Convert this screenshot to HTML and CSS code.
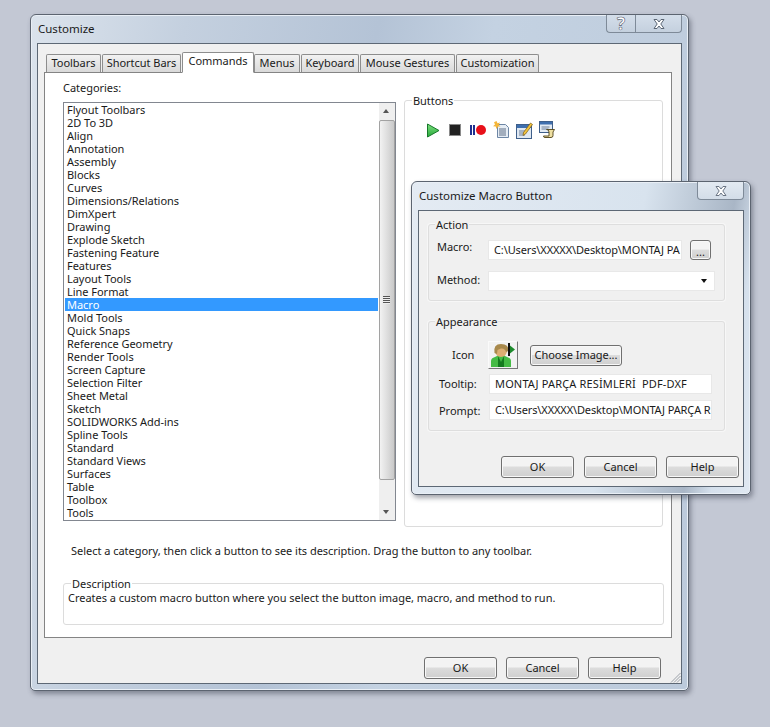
FILE: index.html
```html
<!DOCTYPE html>
<html lang="en">
<head>
<meta charset="utf-8">
<title>Customize</title>
<link rel="stylesheet" href="styles.css">
</head>
<body>
<section class="window main-window">
  <header class="titlebar">
    <span class="title">Customize</span>
    <div class="caption-buttons">
      <span class="caption-btn help-btn">?</span>
      <span class="caption-btn close-btn">
        <svg width="16" height="12" viewBox="0 0 16 12"><path d="M3 1.500h3l2 2.500 2-2.500h3L9.800 6 13 10.500h-3L8 8l-2 2.500H3L6.200 6z" fill="#fff" stroke="#5b6675"/></svg>
      </span>
    </div>
  </header>
  <div class="client main-client">
    <nav class="tabs">
      <span class="tab">Toolbars</span>
      <span class="tab">Shortcut Bars</span>
      <span class="tab tab-active">Commands</span>
      <span class="tab">Menus</span>
      <span class="tab">Keyboard</span>
      <span class="tab">Mouse Gestures</span>
      <span class="tab">Customization</span>
    </nav>
    <div class="page">
      <div class="page-top">
        <div class="categories">
          <div class="cat-label">Categories:</div>
          <div class="listbox">
            <ul class="list">
              <li>Flyout Toolbars</li><li>2D To 3D</li><li>Align</li><li>Annotation</li><li>Assembly</li><li>Blocks</li><li>Curves</li><li>Dimensions/Relations</li><li>DimXpert</li><li>Drawing</li><li>Explode Sketch</li><li>Fastening Feature</li><li>Features</li><li>Layout Tools</li><li>Line Format</li><li class="selected">Macro</li><li>Mold Tools</li><li>Quick Snaps</li><li>Reference Geometry</li><li>Render Tools</li><li>Screen Capture</li><li>Selection Filter</li><li>Sheet Metal</li><li>Sketch</li><li>SOLIDWORKS Add-ins</li><li>Spline Tools</li><li>Standard</li><li>Standard Views</li><li>Surfaces</li><li>Table</li><li>Toolbox</li><li>Tools</li>
            </ul>
            <div class="scrollbar">
              <span class="arrow arrow-up"></span>
              <div class="thumb"><span class="grip"></span></div>
              <span class="arrow arrow-down"></span>
            </div>
          </div>
        </div>
        <div class="group buttons-group">
          <span class="legend">Buttons</span>
          <div class="toolbar">
            <svg width="14" height="15" viewBox="0 0 14 15"><defs><linearGradient id="playFill" x1="0" y1="0" x2="0" y2="1"><stop offset="0" stop-color="#7fe07f"/><stop offset="1" stop-color="#25a83a"/></linearGradient></defs><path d="M1.500 1 13 7.500 1.500 14z" fill="url(#playFill)" stroke="#17782a"/></svg>
            <svg width="13" height="14" viewBox="0 0 13 14"><rect x=".5" y="1.500" width="11" height="11" fill="#222" stroke="#8a8a8a"/></svg>
            <svg width="17" height="14" viewBox="0 0 17 14"><rect x="0" y="2" width="2" height="10" fill="#1f2f8f"/><rect x="3" y="2" width="2" height="10" fill="#1f2f8f"/><circle cx="11" cy="7" r="5" fill="#e8101a"/></svg>
            <svg width="17" height="18" viewBox="0 0 17 18"><path d="M4.500 3.500h8l3 3v10h-11z" fill="#e6edf5" stroke="#6d86a5"/><path d="M6 8h7M6 10h7M6 12h7M6 14h7" stroke="#5f6f85"/><path d="M3.500 0 4.500 2.300 7 1.500 5.700 3.700 7.500 5.500 5 5.500 3.500 8 2.700 5.500 0 5.200 2 3.500 1 1.200z" fill="#f4b63a"/></svg>
            <svg width="17" height="17" viewBox="0 0 17 17"><rect x=".5" y="2.500" width="15" height="14" fill="#dfe8f2" stroke="#3f5f8a"/><rect x="1" y="3" width="14" height="3" fill="#3f6fae"/><path d="M3 9h6M3 11h5M3 13h6" stroke="#6c7f99"/><path d="M14.500 1 16.500 2.500 9.500 12 7 13.500 7.500 10.500z" fill="#f2c33c" stroke="#7a5a12" stroke-width=".7"/></svg>
            <svg width="17" height="18" viewBox="0 0 17 18"><rect x=".5" y=".5" width="13" height="11" fill="#e3ebf4" stroke="#3f5f8a"/><rect x="1" y="1" width="12" height="2.500" fill="#3f6fae"/><path d="M2.500 6h8M2.500 8h7" stroke="#6c7f99"/><path d="M7.500 8.500h8l-1.500 2.500v3.500q0 2-2 2h-6q-1.500 0-1.500-1.500h5.500V11q0-2.500-2.500-2.500z" fill="#efe0a2" stroke="#4f4216" stroke-width=".9"/></svg>
          </div>
        </div>
      </div>
      <p class="hint">Select a category, then click a button to see its description. Drag the button to any toolbar.</p>
      <div class="group desc-group">
        <span class="legend">Description</span>
        <p class="desc-text">Creates a custom macro button where you select the button image, macro, and method to run.</p>
      </div>
    </div>
    <footer class="footer main-footer">
      <span class="btn">OK</span><span class="btn">Cancel</span><span class="btn">Help</span>
    </footer>
    <svg class="resize-grip" width="11" height="11" viewBox="0 0 11 11"><path d="M10.500 1 1 10.500M10.500 4 4 10.500M10.500 7 7 10.500" stroke="#9aa0a8" fill="none"/></svg>
  </div>
</section>

<section class="window dialog">
  <header class="titlebar dialog-titlebar">
    <span class="title">Customize Macro Button</span>
    <div class="caption-buttons">
      <span class="caption-btn dlg-close">
        <svg width="16" height="12" viewBox="0 0 16 12"><path d="M3 1.500h3l2 2.500 2-2.500h3L9.800 6 13 10.500h-3L8 8l-2 2.500H3L6.200 6z" fill="#fff" stroke="#6a7584"/></svg>
      </span>
    </div>
  </header>
  <div class="client dlg-client">
    <div class="group action-group">
      <span class="legend legend-dlg">Action</span>
      <div class="row">
        <span class="field-label macro-label">Macro:</span>
        <span class="field path-field macro-field">C:\Users\XXXXX\Desktop\MONTAJ PA</span>
        <span class="btn browse-btn">...</span>
      </div>
      <div class="row">
        <span class="field-label method-label">Method:</span>
        <span class="field method-field"><span class="combo-arrow"></span></span>
      </div>
    </div>
    <div class="group appearance-group">
      <span class="legend legend-dlg">Appearance</span>
      <div class="row icon-row">
        <span class="field-label icon-label">Icon</span>
        <span class="icon-well">
          <svg width="26" height="24" viewBox="0 0 26 24"><path d="M1 24v-6q0-3 4-4l4-2h4l4 2q4 1 4 4v6z" fill="#45bb45"/><path d="M8 13l3 6 3-6v11H8z" fill="#157a1f"/><circle cx="11" cy="8" r="6" fill="#dcae72"/><path d="M4.500 10Q3 1 11 1t7.500 7l-2.500 1q-1-4-5-3.500Q9 6 7.500 7L7 11z" fill="#a8894c"/><rect x="18" y="0" width="2" height="13" fill="#111"/><path d="M20 2.500l5 4-5 4z" fill="#1d8a2c"/></svg>
        </span>
        <span class="btn choose-btn">Choose Image...</span>
      </div>
      <div class="row tooltip-row">
        <span class="field-label short-label">Tooltip:</span>
        <span class="field text-field tooltip-field">MONTAJ PARÇA RESİMLERİ&nbsp; PDF-DXF</span>
      </div>
      <div class="row prompt-row">
        <span class="field-label short-label prompt-label">Prompt:</span>
        <span class="field text-field path-field">C:\Users\XXXXX\Desktop\MONTAJ PARÇA R</span>
      </div>
    </div>
    <footer class="footer dlg-footer">
      <span class="btn">OK</span><span class="btn">Cancel</span><span class="btn">Help</span>
    </footer>
  </div>
</section>
</body>
</html>
```
FILE: styles.css
```css
* { box-sizing: border-box; }
html, body { margin: 0; height: 100%; }
body {
  position: relative;
  width: 770px;
  height: 727px;
  overflow: hidden;
  background: #c3c8d4;
  font: 11px/14px "Noto Sans", sans-serif;
  color: #1a1a1a;
  letter-spacing: -.03px;
}
p { margin: 0; }
ul { margin: 0; padding: 0; list-style: none; }

.window {
  position: absolute;
  display: flex;
  flex-direction: column;
  border: 1px solid #5c6470;
  border-radius: 6px 6px 5px 5px;
  background: linear-gradient(100deg, #dbe3ec 0%, #c4d0df 20%, #b4c3d6 45%, #c4d2e2 60%, #bccadb 100%);
  box-shadow: inset 0 0 0 1px #e9eff6, 2px 3px 5px rgba(50, 55, 70, .45);
}
.main-window { left: 30px; top: 14px; width: 659px; height: 677px; padding: 0 6px 6px; }
.dialog { left: 411px; top: 181px; width: 340px; height: 314px; padding: 0 6px 7px; background: linear-gradient(100deg, #e4ebf3 0%, #d8e3ee 60%, #a9b6c6 83%, #d5e0ec 90%, #e0e8f1 100%); }

.titlebar { display: flex; justify-content: space-between; height: 28px; flex: none; }
.title { padding: 7px 0 0 1px; font-size: 11.5px; letter-spacing: 0; }

.caption-buttons { display: flex; height: 18px; }
.caption-btn {
  display: flex;
  align-items: center;
  justify-content: center;
  border: 1px solid #7e8a98;
  border-top: 0;
  background: linear-gradient(#d4deea, #c4d0de);
}
.help-btn { width: 29px; border-radius: 0 0 0 4px; border-right: 0; font-size: 17px; font-weight: 700; color: #fff; -webkit-text-stroke: .6px #566070; }
.close-btn { width: 47px; border-radius: 0 0 4px 0; }
.dlg-close { width: 47px; border-radius: 0 0 4px 4px; background: linear-gradient(#e3eaf2, #d3dde8); }

.client {
  position: relative;
  flex: 1;
  border: 1px solid #5d6875;
  background: #f0f0f0;
}
.main-client { padding: 8px 9px 0 6px; }
.dlg-client { padding: 13px 18px 0 9px; }

.tabs { display: grid; grid-template-columns: 56px 80px 72px 47px 59px 96px 84px; margin-left: 2px; height: 20px; align-items: end; position: relative; z-index: 1; }
.tab {
  height: 18px;
  margin-right: 1px;
  border: 1px solid #8d8d8d;
  border-bottom: 0;
  border-radius: 2px 2px 0 0;
  background: linear-gradient(#f2f2f2, #d9d9d9);
  text-align: center;
  line-height: 15px;
  white-space: nowrap;
}
.tab-active { height: 21px; margin-right: 0; background: #fff; border-bottom: 1px solid #fff; margin-bottom: -1px; line-height: 16px; }

.page {
  height: 566px;
  padding: 0 8px 0 18px;
  border: 1px solid #848484;
  background: #fff;
}
.page-top { display: flex; gap: 7px; }
.categories { width: 334px; padding-top: 8px; }
.cat-label { height: 14px; margin-bottom: 7px; }
.listbox {
  display: flex;
  height: 419px;
  border: 1px solid #828790;
  background: #fff;
  overflow: hidden;
}
.list { flex: 1; padding: 0 1px; }
.list li { height: 13px; padding-left: 2px; line-height: 13px; white-space: nowrap; }
.list .selected { background: #3399ff; color: #fff; }

.scrollbar {
  position: relative;
  display: flex;
  flex-direction: column;
  align-items: center;
  width: 16px;
  background: #efefef;
}
.arrow { position: absolute; left: 4px; width: 0; height: 0; border-left: 3.5px solid transparent; border-right: 3.5px solid transparent; }
.arrow-up { top: 6px; border-bottom: 4px solid #555; }
.arrow-down { bottom: 6px; border-top: 4px solid #555; }
.thumb {
  display: flex;
  align-items: center;
  justify-content: center;
  width: 16px;
  height: 360px;
  margin-top: 17px;
  border: 1px solid #a2a2a2;
  border-radius: 2px;
  background: linear-gradient(90deg, #f2f2f2, #dedede 50%, #c9c9c9);
}
.grip { width: 7px; height: 8px; background: repeating-linear-gradient(#555 0 1px, #eee 1px 2px); }

.group {
  position: relative;
  border: 1px solid #dcdcdc;
  border-radius: 3px;
}
.legend { position: absolute; top: -7px; left: 7px; padding: 0 1px; background: #fff; line-height: 14px; }
.legend-dlg { background: #f0f0f0; left: 6px; }
.buttons-group { width: 260px; height: 427px; margin: 27px 0 0 1px; }
.toolbar { display: grid; grid-template-columns: 23px 21px 23px 23px 23px 23px; align-items: center; padding: 20px 0 0 21px; height: 38px; }

.hint { margin-top: 17px; padding-left: 8px; }
.desc-group { width: 601px; height: 42px; margin-top: 25px; padding: 7px 0 0 4px; }

.footer { display: flex; justify-content: flex-end; gap: 9px; }
.main-footer { padding: 19px 11px 0 0; }
.dlg-footer { margin-top: 25px; margin-right: -14px; }
.dlg-footer .btn:first-child { margin-right: 1px; }
.btn {
  display: flex;
  align-items: center;
  justify-content: center;
  width: 73px;
  height: 22px;
  border: 1px solid #707070;
  border-radius: 3px;
  background: linear-gradient(#f3f3f3 0 45%, #dcdcdc 50%, #cfcfcf);
  box-shadow: inset 0 0 0 1px #f8f8f8;
}
.resize-grip { position: absolute; right: 0; bottom: 0; }

.action-group, .appearance-group { width: 297px; border-color: #dedede; box-shadow: 0 0 0 1px #f7f7f7; }
.action-group { height: 77px; padding: 15px 0 0 8px; }
.appearance-group { height: 110px; margin-top: 20px; padding: 19px 0 0 10px; }
.row { display: flex; align-items: center; }
.action-group .row + .row { margin-top: 11px; }
.field-label { width: 51px; flex: none; }
.macro-label { align-self: flex-start; }
.method-label { align-self: flex-start; margin-top: 2px; }
.short-label { width: 50px; }
.prompt-label { margin-top: 2px; }
.field { display: block; height: 20px; line-height: 18px; padding-left: 5px; border: 1px solid #e8e8e8; background: #fff; white-space: nowrap; overflow: hidden; }
.path-field { letter-spacing: -.12px; }
.tooltip-field { letter-spacing: .15px; }
.macro-field { width: 194px; }
.method-field { position: relative; width: 227px; }
.combo-arrow { position: absolute; right: 7px; top: 7px; border-left: 3.5px solid transparent; border-right: 3.5px solid transparent; border-top: 4px solid #111; }
.browse-btn { width: 21px; height: 20px; margin-left: 8px; align-items: flex-end; line-height: 15px; }
.icon-row { height: 28px; }
.icon-label { width: 49px; padding-left: 13px; }
.icon-well { display: flex; align-items: center; justify-content: center; width: 30px; height: 28px; flex: none; border: 1px solid; border-color: #fafafa #777 #777 #fafafa; background: #f2f2f2; }
.choose-btn { width: 92px; height: 21px; margin-left: 12px; }
.tooltip-row { margin-top: 5px; }
.prompt-row { margin-top: 6px; }
.text-field { width: 223px; }
```
